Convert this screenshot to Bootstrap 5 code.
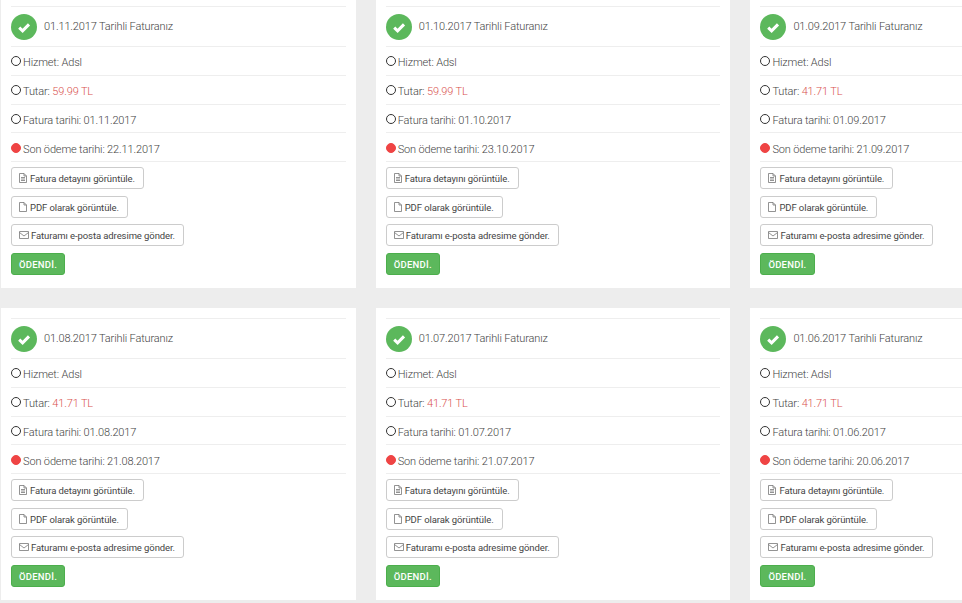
<!DOCTYPE html>
<html lang="tr"><head><meta charset="utf-8"><title>Faturalar</title>
<link href="https://cdn.jsdelivr.net/npm/bootstrap@5.3.0/dist/css/bootstrap.min.css" rel="stylesheet">
<style>
html,body{height:603px;overflow:hidden}
body{background:#ededed;font-family:Roboto,sans-serif;color:#444;font-size:11px;font-weight:300}
.sheet{width:1143px;margin:-4px 0 0 0;display:grid;grid-template-columns:repeat(3,354.7px);gap:20px;padding-left:1px}
.bill{background:#fff;height:292px;padding:10px 10px 0 10px;overflow:hidden}
.bill-head{border-top:1px solid #eee;border-bottom:1px solid #eee;height:41px;gap:7px;font-size:11px;letter-spacing:-.14px;color:#444}
.bill-head span{padding-top:1px}
.tick{width:26px;height:26px;border-radius:50%;background:#5cb85c;flex:none}
.line{border-bottom:1px solid #eee;height:28.8px;gap:2px;padding-top:5px;font-size:11px;letter-spacing:-.14px;color:#444}
.dot{width:10px;height:10px;border-radius:50%;border:1.8px solid #333;flex:none;margin-top:-4px}
.dot-red{background:#ef4444;border-color:#ef4444}
.amount{color:#d9534f}
.acts{padding-top:5px;gap:6.6px}
.gbtn{font-size:9.5px;line-height:14px;padding:4px 8px 2px 7px;border:1px solid #ccc;border-radius:3px;background:#fff;color:#444;font-weight:400;letter-spacing:-.09px;height:22px;gap:3px;display:inline-flex;align-items:center}
.gbtn svg{flex:none;margin-top:-2px}
.gbtn-mail{gap:2px}
.paid{background:#5cb85c;color:#fff;font-size:9.5px;font-weight:500;border:1px solid #4cae4c;border-radius:3px;padding:4px 7px 2px;line-height:14px;height:22px;letter-spacing:.25px}
</style></head><body>
<svg width="0" height="0" class="d-none"><defs>
<symbol id="ic-check" viewBox="0 0 26 26"><path d="M8.2 13.6l3.4 3.2 6.4-6.4" fill="none" stroke="#fff" stroke-width="3"/></symbol>
<symbol id="ic-detail" viewBox="0 0 8 10"><path d="M.5.5h4.5l2.5 2.5v6.500H.5zM5 .5V3h2.500M2 4.500h4M2 6h4M2 7.500h4" fill="none" stroke="#777" stroke-width=".8"/></symbol>
<symbol id="ic-file" viewBox="0 0 8 10"><path d="M.5.5h4.5l2.500 2.500v6.500H.5zM5 .5V3h2.500" fill="none" stroke="#777" stroke-width=".8"/></symbol>
<symbol id="ic-mail" viewBox="0 0 10 8"><path d="M.5.5h9v7h-9zM.5 1.500l4.500 3.500 4.500-3.500" fill="none" stroke="#777" stroke-width=".8"/></symbol>
</defs></svg>
<main class="sheet">

<article class="bill d-flex flex-column">
<div class="bill-head d-flex align-items-center"><svg class="tick" width="26" height="26"><use href="#ic-check"/></svg><span>01.11.2017 Tarihli Faturanız</span></div>
<div class="line d-flex align-items-center"><i class="dot"></i><span>Hizmet: Adsl</span></div>
<div class="line d-flex align-items-center"><i class="dot"></i><span>Tutar: <span class="amount">59.99 TL</span></span></div>
<div class="line d-flex align-items-center"><i class="dot"></i><span>Fatura tarihi: 01.11.2017</span></div>
<div class="line d-flex align-items-center"><i class="dot dot-red"></i><span>Son ödeme tarihi: 22.11.2017</span></div>
<div class="acts d-flex flex-column align-items-start">
<button class="gbtn"><svg width="8" height="10"><use href="#ic-detail"/></svg>Fatura detayını görüntüle.</button>
<button class="gbtn"><svg width="8" height="10"><use href="#ic-file"/></svg>PDF olarak görüntüle.</button>
<button class="gbtn gbtn-mail"><svg width="10" height="8"><use href="#ic-mail"/></svg>Faturamı e-posta adresime gönder.</button>
<button class="paid">ÖDENDİ.</button></div>
</article>

<article class="bill d-flex flex-column">
<div class="bill-head d-flex align-items-center"><svg class="tick" width="26" height="26"><use href="#ic-check"/></svg><span>01.10.2017 Tarihli Faturanız</span></div>
<div class="line d-flex align-items-center"><i class="dot"></i><span>Hizmet: Adsl</span></div>
<div class="line d-flex align-items-center"><i class="dot"></i><span>Tutar: <span class="amount">59.99 TL</span></span></div>
<div class="line d-flex align-items-center"><i class="dot"></i><span>Fatura tarihi: 01.10.2017</span></div>
<div class="line d-flex align-items-center"><i class="dot dot-red"></i><span>Son ödeme tarihi: 23.10.2017</span></div>
<div class="acts d-flex flex-column align-items-start">
<button class="gbtn"><svg width="8" height="10"><use href="#ic-detail"/></svg>Fatura detayını görüntüle.</button>
<button class="gbtn"><svg width="8" height="10"><use href="#ic-file"/></svg>PDF olarak görüntüle.</button>
<button class="gbtn gbtn-mail"><svg width="10" height="8"><use href="#ic-mail"/></svg>Faturamı e-posta adresime gönder.</button>
<button class="paid">ÖDENDİ.</button></div>
</article>

<article class="bill d-flex flex-column">
<div class="bill-head d-flex align-items-center"><svg class="tick" width="26" height="26"><use href="#ic-check"/></svg><span>01.09.2017 Tarihli Faturanız</span></div>
<div class="line d-flex align-items-center"><i class="dot"></i><span>Hizmet: Adsl</span></div>
<div class="line d-flex align-items-center"><i class="dot"></i><span>Tutar: <span class="amount">41.71 TL</span></span></div>
<div class="line d-flex align-items-center"><i class="dot"></i><span>Fatura tarihi: 01.09.2017</span></div>
<div class="line d-flex align-items-center"><i class="dot dot-red"></i><span>Son ödeme tarihi: 21.09.2017</span></div>
<div class="acts d-flex flex-column align-items-start">
<button class="gbtn"><svg width="8" height="10"><use href="#ic-detail"/></svg>Fatura detayını görüntüle.</button>
<button class="gbtn"><svg width="8" height="10"><use href="#ic-file"/></svg>PDF olarak görüntüle.</button>
<button class="gbtn gbtn-mail"><svg width="10" height="8"><use href="#ic-mail"/></svg>Faturamı e-posta adresime gönder.</button>
<button class="paid">ÖDENDİ.</button></div>
</article>

<article class="bill d-flex flex-column">
<div class="bill-head d-flex align-items-center"><svg class="tick" width="26" height="26"><use href="#ic-check"/></svg><span>01.08.2017 Tarihli Faturanız</span></div>
<div class="line d-flex align-items-center"><i class="dot"></i><span>Hizmet: Adsl</span></div>
<div class="line d-flex align-items-center"><i class="dot"></i><span>Tutar: <span class="amount">41.71 TL</span></span></div>
<div class="line d-flex align-items-center"><i class="dot"></i><span>Fatura tarihi: 01.08.2017</span></div>
<div class="line d-flex align-items-center"><i class="dot dot-red"></i><span>Son ödeme tarihi: 21.08.2017</span></div>
<div class="acts d-flex flex-column align-items-start">
<button class="gbtn"><svg width="8" height="10"><use href="#ic-detail"/></svg>Fatura detayını görüntüle.</button>
<button class="gbtn"><svg width="8" height="10"><use href="#ic-file"/></svg>PDF olarak görüntüle.</button>
<button class="gbtn gbtn-mail"><svg width="10" height="8"><use href="#ic-mail"/></svg>Faturamı e-posta adresime gönder.</button>
<button class="paid">ÖDENDİ.</button></div>
</article>

<article class="bill d-flex flex-column">
<div class="bill-head d-flex align-items-center"><svg class="tick" width="26" height="26"><use href="#ic-check"/></svg><span>01.07.2017 Tarihli Faturanız</span></div>
<div class="line d-flex align-items-center"><i class="dot"></i><span>Hizmet: Adsl</span></div>
<div class="line d-flex align-items-center"><i class="dot"></i><span>Tutar: <span class="amount">41.71 TL</span></span></div>
<div class="line d-flex align-items-center"><i class="dot"></i><span>Fatura tarihi: 01.07.2017</span></div>
<div class="line d-flex align-items-center"><i class="dot dot-red"></i><span>Son ödeme tarihi: 21.07.2017</span></div>
<div class="acts d-flex flex-column align-items-start">
<button class="gbtn"><svg width="8" height="10"><use href="#ic-detail"/></svg>Fatura detayını görüntüle.</button>
<button class="gbtn"><svg width="8" height="10"><use href="#ic-file"/></svg>PDF olarak görüntüle.</button>
<button class="gbtn gbtn-mail"><svg width="10" height="8"><use href="#ic-mail"/></svg>Faturamı e-posta adresime gönder.</button>
<button class="paid">ÖDENDİ.</button></div>
</article>

<article class="bill d-flex flex-column">
<div class="bill-head d-flex align-items-center"><svg class="tick" width="26" height="26"><use href="#ic-check"/></svg><span>01.06.2017 Tarihli Faturanız</span></div>
<div class="line d-flex align-items-center"><i class="dot"></i><span>Hizmet: Adsl</span></div>
<div class="line d-flex align-items-center"><i class="dot"></i><span>Tutar: <span class="amount">41.71 TL</span></span></div>
<div class="line d-flex align-items-center"><i class="dot"></i><span>Fatura tarihi: 01.06.2017</span></div>
<div class="line d-flex align-items-center"><i class="dot dot-red"></i><span>Son ödeme tarihi: 20.06.2017</span></div>
<div class="acts d-flex flex-column align-items-start">
<button class="gbtn"><svg width="8" height="10"><use href="#ic-detail"/></svg>Fatura detayını görüntüle.</button>
<button class="gbtn"><svg width="8" height="10"><use href="#ic-file"/></svg>PDF olarak görüntüle.</button>
<button class="gbtn gbtn-mail"><svg width="10" height="8"><use href="#ic-mail"/></svg>Faturamı e-posta adresime gönder.</button>
<button class="paid">ÖDENDİ.</button></div>
</article>

</main>
</body></html>
